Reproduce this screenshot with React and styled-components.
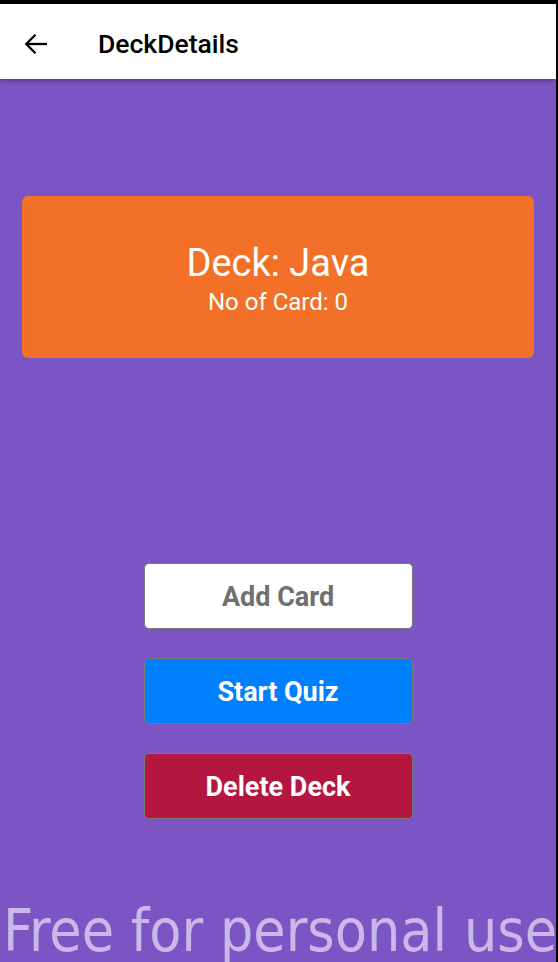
import React from 'react';
import styled, { createGlobalStyle } from 'styled-components';

const GlobalStyle = createGlobalStyle`
	html, body {
		margin: 0;
		padding: 0;
		background: #000;
	}
	* {
		box-sizing: border-box;
	}
`;

const Screen = styled.div`
	position: relative;
	width: 558px;
	height: 962px;
	overflow: hidden;
	border-top: 4px solid #000;
	border-right: 2px solid #000;
	background: #7b55c4;
	font-family: Roboto, 'Liberation Sans', sans-serif;
	display: flex;
	flex-direction: column;
`;

const Header = styled.header`
	height: 75px;
	flex-shrink: 0;
	background: #fff;
	display: flex;
	align-items: center;
	box-shadow: 0 2px 4px rgba(0, 0, 0, 0.3);
	z-index: 1;
`;

const BackButton = styled.button`
	width: 98px;
	height: 75px;
	padding: 4px 0 0 24px;
	border: none;
	background: transparent;
	display: flex;
	align-items: center;
	justify-content: flex-start;
`;

const Title = styled.h1`
	margin: 3px 0 0;
	font-size: 26.5px;
	font-weight: 500;
	color: #000;
`;

const Body = styled.main`
	flex: 1;
	display: flex;
	flex-direction: column;
	align-items: center;
	padding: 117px 22px 0 22px;
`;

const DeckCard = styled.section`
	width: 100%;
	height: 162px;
	background: #f27028;
	border-radius: 6px;
	display: flex;
	flex-direction: column;
	align-items: center;
	justify-content: center;
	color: #fff;
	padding-top: 4px;
`;

const DeckName = styled.div`
	font-size: 38px;
	line-height: 44px;
`;

const DeckCount = styled.div`
	font-size: 24px;
	line-height: 30px;
	margin-top: 2px;
`;

const Actions = styled.div`
	margin-top: 205px;
	display: flex;
	flex-direction: column;
	gap: 29px;
`;

const variants = {
	light: { bg: '#fff', fg: '#707070' },
	primary: { bg: '#0080ff', fg: '#fff' },
	danger: { bg: '#b5163f', fg: '#fff' }
};

const ActionButton = styled.button`
	width: 269px;
	height: 66px;
	border: 1.5px solid #7a7a7a;
	border-radius: 5px;
	background: ${p => variants[p.$variant].bg};
	color: ${p => variants[p.$variant].fg};
	font-family: Roboto, 'Liberation Sans', sans-serif;
	font-size: 27px;
	font-weight: 700;
	padding: 2px 0 0;
`;

const Watermark = styled.div`
	position: absolute;
	left: 3px;
	top: 898px;
	font-family: 'DejaVu Sans Condensed', 'DejaVu Sans', sans-serif;
	font-stretch: condensed;
	font-size: 58.5px;
	line-height: 58.5px;
	white-space: nowrap;
	color: #c9b8e8;
	pointer-events: none;
`;

const BackIcon = () => (
	<svg width="24" height="22" viewBox="0 0 24 22" fill="none" stroke="#000" strokeWidth="2.3">
		<path d="M23 11H2.5" />
		<path d="M11.5 1.8L2.3 11l9.2 9.2" />
	</svg>
);

const App = () => {
	return (
		<>
			<GlobalStyle />
			<Screen>
				<Header>
					<BackButton aria-label="Back">
						<BackIcon />
					</BackButton>
					<Title>DeckDetails</Title>
				</Header>
				<Body>
					<DeckCard>
						<DeckName>Deck: Java</DeckName>
						<DeckCount>No of Card: 0</DeckCount>
					</DeckCard>
					<Actions>
						<ActionButton $variant="light">Add Card</ActionButton>
						<ActionButton $variant="primary">Start Quiz</ActionButton>
						<ActionButton $variant="danger">Delete Deck</ActionButton>
					</Actions>
				</Body>
				<Watermark>Free for personal use</Watermark>
			</Screen>
		</>
	);
};

export default App;
